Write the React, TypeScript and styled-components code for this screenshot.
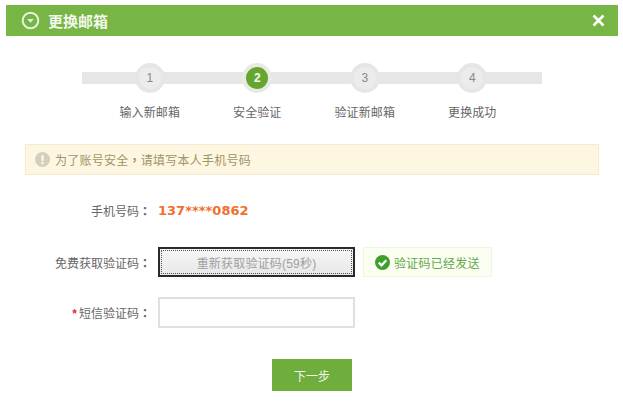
import React from "react";
import styled, { createGlobalStyle } from "styled-components";

const GlobalStyle = createGlobalStyle`
  html, body {
    margin: 0;
    padding: 0;
    background: #fff;
    font-family: "Liberation Sans", "Noto Sans CJK SC", sans-serif;
  }
`;

const STEPS = ["输入新邮箱", "安全验证", "验证新邮箱", "更换成功"];

const App = () => {
  return (
    <>
      <GlobalStyle />
      <Dialog>
        <Header>
          <HeaderLeft>
            <svg width="19" height="19" viewBox="0 0 19 19">
              <circle cx="9.5" cy="9.5" r="7.8" fill="none" stroke="#e6f3dc" strokeWidth="2" />
              <path d="M6.2 8 L12.8 8 L9.5 11.8 Z" fill="#e6f3dc" />
            </svg>
            <Title>更换邮箱</Title>
          </HeaderLeft>
          <svg width="13" height="13" viewBox="0 0 13 13">
            <path d="M1.5 1.5 L11.5 11.5 M11.5 1.5 L1.5 11.5" stroke="#fff" strokeWidth="2.6" />
          </svg>
        </Header>

        <Steps>
          <Track>
            {STEPS.map((s, i) => (
              <Slot key={s}>
                <Circle $active={i === 1}>{i + 1}</Circle>
              </Slot>
            ))}
          </Track>
          <Labels>
            {STEPS.map((s) => (
              <Label key={s}>{s}</Label>
            ))}
          </Labels>
        </Steps>

        <Notice>
          <svg width="15" height="15" viewBox="0 0 15 15">
            <circle cx="7.5" cy="7.5" r="7.5" fill="#d3cfbd" />
            <rect x="6.3" y="3" width="2.4" height="6" rx="1" fill="#fdf7e0" />
            <circle cx="7.5" cy="11" r="1.3" fill="#fdf7e0" />
          </svg>
          <NoticeText>
            为了账号安全<Punct>，</Punct>请填写本人手机号码
          </NoticeText>
        </Notice>

        <Form>
          <Row $h={20} $mt={25}>
            <FieldLabel>
              手机号码<Punct>：</Punct>
            </FieldLabel>
            <Phone>137****0862</Phone>
          </Row>
          <Row $h={30} $mt={27}>
            <FieldLabel>
              免费获取验证码<Punct>：</Punct>
            </FieldLabel>
            <ResendButton type="button">
              <ResendInner>重新获取验证码(59秒)</ResendInner>
            </ResendButton>
            <SentTag>
              <svg width="15" height="15" viewBox="0 0 15 15">
                <circle cx="7.5" cy="7.5" r="7.5" fill="#3f9e2e" />
                <path d="M3.8 7.6 L6.5 10.3 L11.3 5.2" fill="none" stroke="#fff" strokeWidth="2.2" />
              </svg>
              <span>验证码已经发送</span>
            </SentTag>
          </Row>
          <Row $h={31} $mt={20}>
            <FieldLabel>
              <Star>*</Star>短信验证码<Punct>：</Punct>
            </FieldLabel>
            <CodeInput />
          </Row>
        </Form>

        <Footer>
          <NextButton type="button">下一步</NextButton>
        </Footer>
      </Dialog>
    </>
  );
};

export default App;

const Dialog = styled.div`
  width: 623px;
  height: 404px;
  padding-top: 5px;
  box-sizing: border-box;
  overflow: hidden;
`;

const Header = styled.div`
  margin: 0 5px 0 6px;
  height: 31px;
  background: #77b544;
  display: flex;
  align-items: center;
  justify-content: space-between;
  padding: 0 13px 0 15px;
`;

const HeaderLeft = styled.div`
  display: flex;
  align-items: center;
  gap: 8px;
`;

const Title = styled.span`
  color: #f2f8ec;
  font-size: 15px;
  font-weight: bold;
`;

const Steps = styled.div`
  width: 460px;
  margin: 26px 0 0 82px;
`;

const Track = styled.div`
  height: 32px;
  padding-left: 14px;
  display: flex;
  background: linear-gradient(#e6e6e6, #e6e6e6) 0 10px / 100% 12px no-repeat;
`;

const Slot = styled.div`
  width: 107.5px;
  flex: none;
  display: flex;
  justify-content: center;
`;

const Circle = styled.div<{ $active?: boolean }>`
  width: 22px;
  height: 22px;
  margin-top: 1px;
  border-radius: 50%;
  box-sizing: content-box;
  border: 4px solid ${(p) => (p.$active ? "#e8ebe4" : "#e6e6e6")};
  background: ${(p) => (p.$active ? "#65a630" : "#ececec")};
  color: ${(p) => (p.$active ? "#f4faee" : "#888")};
  font-size: 12px;
  font-weight: ${(p) => (p.$active ? "bold" : "normal")};
  display: flex;
  align-items: center;
  justify-content: center;
`;

const Labels = styled.div`
  display: flex;
  padding-left: 14px;
  margin-top: 10px;
`;

const Label = styled.div`
  width: 107.5px;
  flex: none;
  text-align: center;
  color: #666;
  font-size: 12px;
  letter-spacing: 0.1px;
  line-height: 18px;
`;

const Notice = styled.div`
  margin: 22px 0 0 25px;
  width: 574px;
  height: 31px;
  box-sizing: border-box;
  background: #fdf7e1;
  border: 1px solid #f3ecd0;
  display: flex;
  align-items: center;
  gap: 5px;
  padding-left: 9px;
`;

const NoticeText = styled.span`
  color: #a09468;
  font-size: 12px;
  letter-spacing: 0.25px;
`;

/* full-width punctuation sits centred in its box in the reference */
const Punct = styled.span`
  font-family: "Noto Sans CJK TC", sans-serif;
  font-weight: bold;
`;

const Form = styled.div`
  display: flex;
  flex-direction: column;
`;

const Row = styled.div<{ $h: number; $mt: number }>`
  height: ${(p) => p.$h}px;
  margin-top: ${(p) => p.$mt}px;
  display: flex;
  align-items: center;
`;

const FieldLabel = styled.div`
  width: 151px;
  margin-right: 7px;
  text-align: right;
  color: #666;
  font-size: 12px;
  white-space: nowrap;
`;

const Star = styled.span`
  color: #e03040;
  font-weight: bold;
  margin-right: 2px;
`;

const Phone = styled.span`
  color: #f07030;
  font-family: "DejaVu Sans", sans-serif;
  font-size: 13px;
  font-weight: bold;
`;

const ResendButton = styled.button`
  width: 197px;
  height: 30px;
  padding: 0;
  box-sizing: border-box;
  border: 2px solid #2a2a2a;
  background: linear-gradient(#f6f6f6, #e8e8e8);
  display: flex;
  align-items: stretch;
  font: inherit;
`;

const ResendInner = styled.span`
  flex: 1;
  margin: 1px;
  border: 1px dotted #555;
  color: #a0a0a0;
  font-size: 12px;
  letter-spacing: 0.2px;
  display: flex;
  align-items: center;
  justify-content: center;
`;

const SentTag = styled.div`
  margin-left: 8px;
  width: 129px;
  height: 30px;
  box-sizing: border-box;
  background: #fbfff2;
  border: 1px solid #eef5dc;
  display: flex;
  align-items: center;
  gap: 4px;
  padding-left: 11px;
  color: #62a847;
  font-size: 12px;
  letter-spacing: 0.25px;
`;

const CodeInput = styled.input`
  width: 197px;
  height: 31px;
  box-sizing: border-box;
  border: 2px solid #e0e0e0;
  background: #fff;
  outline: none;
`;

const Footer = styled.div`
  margin: 31px 0 0 272px;
`;

const NextButton = styled.button`
  width: 80px;
  height: 32px;
  border: none;
  padding: 0;
  background: #6fae3c;
  color: #f2f8ec;
  font-family: inherit;
  font-size: 12px;
`;
